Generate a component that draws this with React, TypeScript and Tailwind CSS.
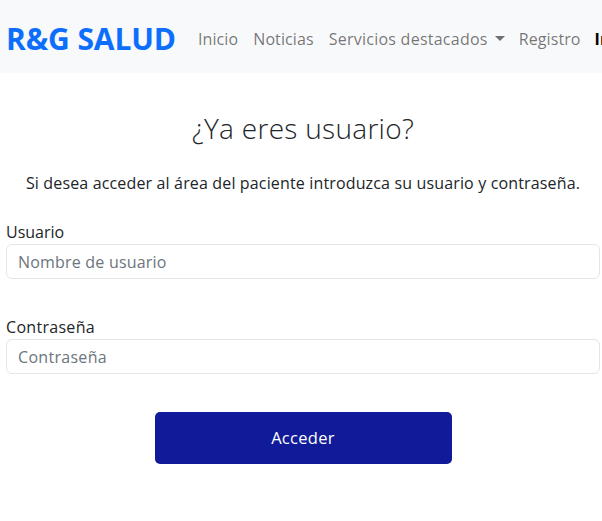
import React from "react";

export default function App() {
  const font = { fontFamily: '"Open Sans", "Liberation Sans", sans-serif' };
  return (
    <div className="w-[602px] h-[521px] bg-white overflow-hidden" style={font}>
      <nav className="h-[73px] bg-[#f8f9fa] flex items-center pl-[6px] pt-[4px] whitespace-nowrap overflow-hidden">
        <span className="text-[30px] font-bold text-[#0d6efd] tracking-[-0.1px] leading-none">R&amp;G SALUD</span>
        <div className="flex items-center ml-[22px] text-[16px] text-[rgba(0,0,0,0.55)] gap-[15px] tracking-[0.1px]">
          <span>Inicio</span>
          <span>Noticias</span>
          <span className="flex items-center gap-[7px]">
            <span className="tracking-[0.25px]">Servicios destacados</span>
            <span className="w-0 h-0 border-l-[5px] border-r-[5px] border-t-[5px] border-l-transparent border-r-transparent border-t-[rgba(0,0,0,0.55)]"></span>
          </span>
          <span className="-ml-[1px]">Registro</span>
          <span className="text-black font-bold -ml-[1px]">Iniciar sesión</span>
        </div>
      </nav>
      <main className="pl-[6px] pr-[2px] pt-[38px]">
        <h2 className="text-center text-[28px] font-light text-[#212529] leading-[34px] tracking-[0.3px]">¿Ya eres usuario?</h2>
        <p className="text-center text-[16px] text-[#212529] mt-[26px] leading-[24px] tracking-[0.15px]">
          Si desea acceder al área del paciente introduzca su usuario y contraseña.
        </p>
        <div className="mt-[25px]">
          <label className="block text-[16px] text-[#212529] leading-[24px]">Usuario</label>
          <input
            className="w-full h-[35px] border border-[#e3e6e9] rounded-[6px] px-[11px] text-[16px] text-[#212529] placeholder:text-[#6c757d] outline-none tracking-[0.2px]"
            placeholder="Nombre de usuario"
            style={font}
          />
        </div>
        <div className="mt-[36px]">
          <label className="block text-[16px] text-[#212529] leading-[24px] tracking-[0.3px]">Contraseña</label>
          <input
            type="password"
            className="w-full h-[35px] border border-[#e3e6e9] rounded-[6px] px-[11px] text-[16px] text-[#212529] placeholder:text-[#6c757d] outline-none tracking-[0.3px]"
            placeholder="Contraseña"
            style={font}
          />
        </div>
        <div className="flex justify-center mt-[38px]">
          <button className="w-[297px] h-[52px] bg-[#111b99] text-white text-[16.5px] rounded-[5px] tracking-[0.3px]" style={font}>
            Acceder
          </button>
        </div>
      </main>
    </div>
  );
}
